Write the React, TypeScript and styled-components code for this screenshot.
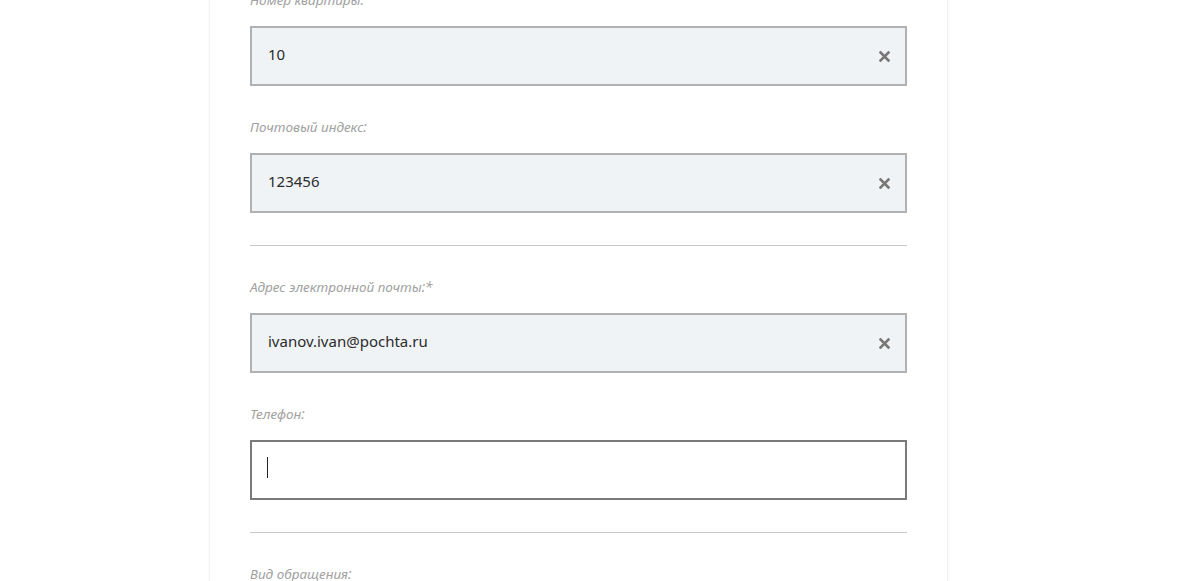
import React from "react"
import styled, { createGlobalStyle } from "styled-components"

const GlobalStyle = createGlobalStyle`
    html, body {
        margin: 0;
        padding: 0;
        background: #fff;
        font-family: "Noto Sans", Roboto, Arial, sans-serif;
    }
`

const Page = styled.div`
    width: 1182px;
    height: 581px;
    overflow: hidden;
    background: #fff;
`

const Card = styled.div`
    width: 657px;
    margin-left: 209px;
    padding: 0 40px 40px;
    border-left: 1px solid #f1f1f1;
    border-right: 1px solid #f1f1f1;
    box-shadow: 0 0 3px rgba(0, 0, 0, 0.03);
    min-height: 640px;
`

const Form = styled.div`
    display: flex;
    flex-direction: column;
    gap: 32px;
    margin-top: -9px;
`

const Field = styled.div`
    display: flex;
    flex-direction: column;
    gap: 17px;
`

const Label = styled.label`
    font-size: 13.5px;
    line-height: 18px;
    font-style: italic;
    color: #a1a1a1;
`

const InputBox = styled.div<{ $focused?: boolean }>`
    position: relative;
    height: 60px;
    box-sizing: border-box;
    border: 2px solid ${p => (p.$focused ? "#7a7a7a" : "#b1b1b1")};
    background: ${p => (p.$focused ? "#fff" : "#eff3f6")};
    display: flex;
    align-items: center;
    padding: 0 40px 5px 16px;
`

const Value = styled.span`
    font-size: 15px;
    line-height: 20px;
    color: #2b2b2b;
`

const Caret = styled.span`
    display: block;
    width: 1px;
    height: 21px;
    background: #222;
    margin-left: -1px;
`

const Clear = styled.button`
    position: absolute;
    right: 15px;
    top: 50%;
    transform: translateY(-50%);
    width: 12px;
    height: 12px;
    padding: 0;
    border: 0;
    background: none;
    display: flex;
    align-items: center;
    justify-content: center;
    cursor: pointer;
`

const Divider = styled.hr`
    margin: 0;
    border: 0;
    height: 1px;
    background: #c9c9c9;
`

const ClearIcon = () => (
    <svg width="11" height="11" viewBox="0 0 11 11">
        <path d="M1.5 1.5 L9.5 9.5 M9.5 1.5 L1.5 9.5" stroke="#777" strokeWidth="2.6" strokeLinecap="square" />
    </svg>
)

const TextField = ({ label, value }: { label: string; value: string }) => (
    <Field>
        <Label>{label}</Label>
        <InputBox>
            <Value>{value}</Value>
            <Clear aria-label="Очистить">
                <ClearIcon />
            </Clear>
        </InputBox>
    </Field>
)

export default function App() {
    return (
        <Page>
            <GlobalStyle />
            <Card>
                <Form>
                    <TextField label="Номер квартиры:" value="10" />
                    <TextField label="Почтовый индекс:" value="123456" />
                    <Divider />
                    <TextField label="Адрес электронной почты:*" value="ivanov.ivan@pochta.ru" />
                    <Field>
                        <Label>Телефон:</Label>
                        <InputBox $focused>
                            <Caret />
                        </InputBox>
                    </Field>
                    <Divider />
                    <Field>
                        <Label>Вид обращения:</Label>
                    </Field>
                </Form>
            </Card>
        </Page>
    )
}
